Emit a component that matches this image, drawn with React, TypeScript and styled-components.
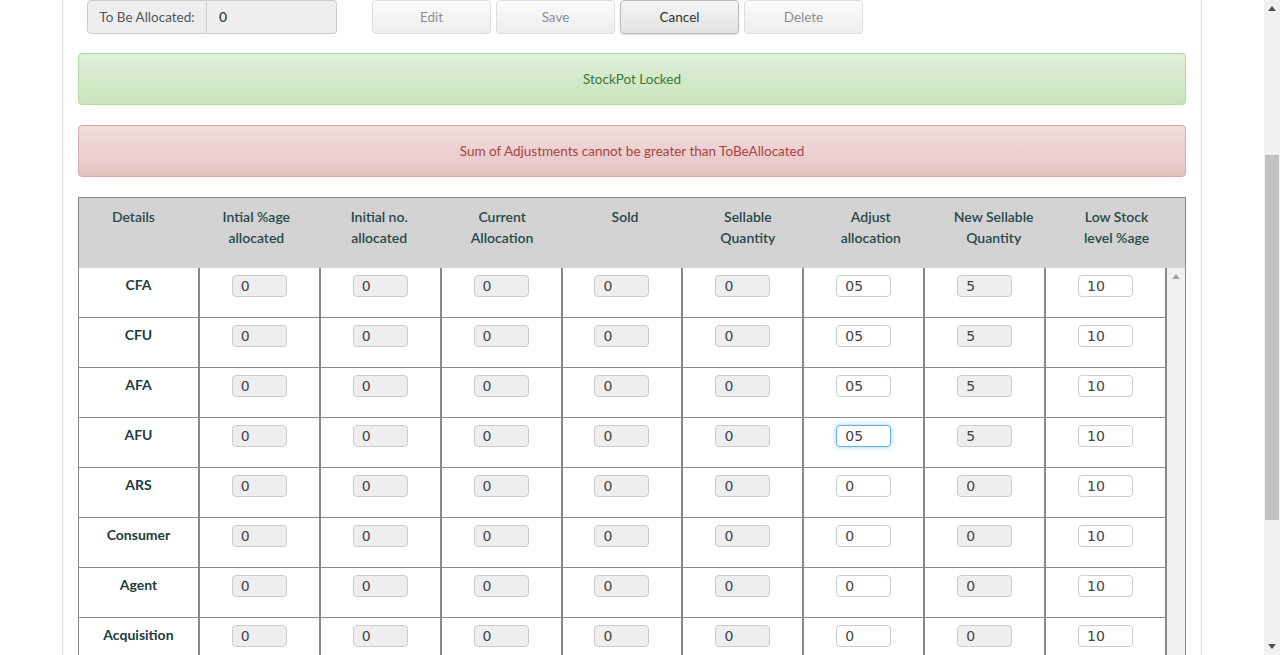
import React from "react";
import styled, { createGlobalStyle, css } from "styled-components";

const Global = createGlobalStyle`
  html, body { margin: 0; padding: 0; background: #fff; }
  body { font-family: Lato, "Open Sans", "DejaVu Sans", sans-serif; font-size: 14px; color: #333; overflow: hidden; }
  * { box-sizing: border-box; }
`;

const Page = styled.div`
  display: flex;
  width: 1280px;
  height: 655px;
  overflow: hidden;
`;

const Viewport = styled.div`
  flex: 1;
  height: 655px;
  overflow: hidden;
`;

const Container = styled.div`
  width: 1140px;
  margin: 0 auto;
  min-height: 655px;
  border-left: 1px solid #ddd;
  border-right: 1px solid #ddd;
  padding: 0 15px;
`;

const TopRow = styled.div`
  display: flex;
  align-items: center;
  padding-left: 9px;
  height: 34px;
`;

const InputGroup = styled.div`
  display: flex;
  width: 250px;
  height: 34px;
  margin-right: 35px;
`;

const Addon = styled.span`
  width: 120px;
  display: flex;
  align-items: center;
  justify-content: center;
  padding-bottom: 1px;
  background: #eee;
  border: 1px solid #ccc;
  border-radius: 4px 0 0 4px;
  color: #555;
  font-size: 13.5px;
`;

const GroupInput = styled.input`
  flex: 1;
  min-width: 0;
  background: #eee;
  border: 1px solid #ccc;
  border-left: none;
  border-radius: 0 4px 4px 0;
  padding: 0 0 1px 12px;
  font: 600 14px Lato, "Open Sans", sans-serif;
  color: #444;
  outline: none;
`;

const Buttons = styled.div`
  display: flex;
  gap: 5px;
`;

const Btn = styled.button<{ $active?: boolean }>`
  width: 119px;
  height: 34px;
  padding: 0 0 1px;
  border-radius: 4px;
  font: 400 13.5px Lato, "Open Sans", sans-serif;
  cursor: pointer;
  ${(p) =>
    p.$active
      ? css`
          color: #333;
          border: 1px solid #bdbdbd;
          background: linear-gradient(#f6f6f6, #e2e2e2);
          box-shadow: 0 1px 2px rgba(0, 0, 0, 0.15);
        `
      : css`
          color: #8f8f8f;
          border: 1px solid #dedede;
          background: linear-gradient(#fbfbfb, #ededed);
        `}
`;

const Alert = styled.div<{ $kind: "success" | "danger" }>`
  margin-top: 19px;
  height: 52px;
  display: flex;
  align-items: center;
  justify-content: center;
  padding-bottom: 1px;
  border-radius: 4px;
  font-size: 13.5px;
  ${(p) =>
    p.$kind === "success"
      ? css`
          color: #3c763d;
          border: 1px solid #b2dba1;
          background: linear-gradient(#dff0d8, #c8e5bc);
        `
      : css`
          margin-top: 20px;
          color: #a94442;
          border: 1px solid #dca7a7;
          background: linear-gradient(#f2dede, #e7c3c3);
        `}
`;

const Table = styled.div`
  margin-top: 20px;
  border: 1px solid #888;
  border-bottom: none;
`;

const HeadRow = styled.div`
  display: grid;
  grid-template-columns: repeat(9, 1fr);
  background: #d3d3d3;
  height: 70px;
`;

const HeadCell = styled.div`
  padding: 8px 14px 0 0;
  text-align: center;
  line-height: 21px;
  font-weight: 600;
  color: #284848;
  white-space: pre-line;
`;

const BodyWrap = styled.div`
  display: flex;
`;

const Body = styled.div`
  flex: 1;
  display: grid;
  grid-template-columns: repeat(9, 1fr);
  grid-auto-rows: 50px;
`;

const Cell = styled.div`
  border-right: 2px solid #888;
  border-bottom: 1px solid #888;
  padding-top: 7px;
  display: flex;
  justify-content: center;
  align-items: flex-start;
`;

const Label = styled.span`
  margin-top: -1px;
  line-height: 21px;
  font-weight: 700;
  color: #1d3d3d;
`;

const Field = styled.input<{ $ro?: boolean; $focus?: boolean }>`
  width: 55px;
  height: 22px;
  border-radius: 4px;
  border: 1px solid #ccc;
  padding: 0 8px;
  font: 400 14px "DejaVu Sans", Lato, sans-serif;
  color: #444;
  outline: none;
  background: ${(p) => (p.$ro ? "#eee" : "#fff")};
  ${(p) =>
    p.$focus &&
    css`
      border-color: #66afe9;
      box-shadow: 0 0 5px rgba(102, 175, 233, 0.6);
    `}
`;

const TableScroll = styled.div`
  width: 18px;
  background: #f1f1f1;
  display: flex;
  flex-direction: column;
  align-items: center;
  padding-top: 6px;
`;

const PageScroll = styled.div`
  width: 16px;
  height: 655px;
  background: #f1f1f1;
  display: flex;
  flex-direction: column;
`;

const ArrowBox = styled.div`
  height: 17px;
  display: flex;
  align-items: center;
  justify-content: center;
`;

const Track = styled.div`
  flex: 1;
  padding: 138px 1px 0 1px;
`;

const Thumb = styled.div`
  height: 365px;
  background: #c1c1c1;
`;

const Arrow = ({ down, color }: { down?: boolean; color: string }) => (
  <svg width="8" height="5" viewBox="0 0 8 5">
    <polygon points={down ? "0,0 8,0 4,5" : "4,0 8,5 0,5"} fill={color} />
  </svg>
);

const heads = [
  "Details",
  "Intial %age\nallocated",
  "Initial no.\nallocated",
  "Current\nAllocation",
  "Sold",
  "Sellable\nQuantity",
  "Adjust\nallocation",
  "New Sellable\nQuantity",
  "Low Stock\nlevel %age",
];

type Row = { name: string; adj: string; sell: string; focus?: boolean };
const rows: Row[] = [
  { name: "CFA", adj: "05", sell: "5" },
  { name: "CFU", adj: "05", sell: "5" },
  { name: "AFA", adj: "05", sell: "5" },
  { name: "AFU", adj: "05", sell: "5", focus: true },
  { name: "ARS", adj: "0", sell: "0" },
  { name: "Consumer", adj: "0", sell: "0" },
  { name: "Agent", adj: "0", sell: "0" },
  { name: "Acquisition", adj: "0", sell: "0" },
];

export default function App() {
  return (
    <>
      <Global />
      <Page>
        <Viewport>
          <Container>
            <TopRow>
              <InputGroup>
                <Addon>To Be Allocated:</Addon>
                <GroupInput readOnly defaultValue="0" />
              </InputGroup>
              <Buttons>
                <Btn>Edit</Btn>
                <Btn>Save</Btn>
                <Btn $active>Cancel</Btn>
                <Btn>Delete</Btn>
              </Buttons>
            </TopRow>
            <Alert $kind="success">StockPot Locked</Alert>
            <Alert $kind="danger">Sum of Adjustments cannot be greater than ToBeAllocated</Alert>
            <Table>
              <HeadRow>
                {heads.map((h) => (
                  <HeadCell key={h}>{h}</HeadCell>
                ))}
              </HeadRow>
              <BodyWrap>
                <Body>
                  {rows.map((r) => (
                    <React.Fragment key={r.name}>
                      <Cell>
                        <Label>{r.name}</Label>
                      </Cell>
                      {[0, 1, 2, 3, 4].map((i) => (
                        <Cell key={i}>
                          <Field $ro readOnly defaultValue="0" />
                        </Cell>
                      ))}
                      <Cell>
                        <Field $focus={r.focus} defaultValue={r.adj} />
                      </Cell>
                      <Cell>
                        <Field $ro readOnly defaultValue={r.sell} />
                      </Cell>
                      <Cell>
                        <Field defaultValue="10" />
                      </Cell>
                    </React.Fragment>
                  ))}
                </Body>
                <TableScroll>
                  <Arrow color="#a3a3a3" />
                </TableScroll>
              </BodyWrap>
            </Table>
          </Container>
        </Viewport>
        <PageScroll>
          <ArrowBox>
            <Arrow color="#505050" />
          </ArrowBox>
          <Track>
            <Thumb />
          </Track>
          <ArrowBox>
            <Arrow down color="#505050" />
          </ArrowBox>
        </PageScroll>
      </Page>
    </>
  );
}
